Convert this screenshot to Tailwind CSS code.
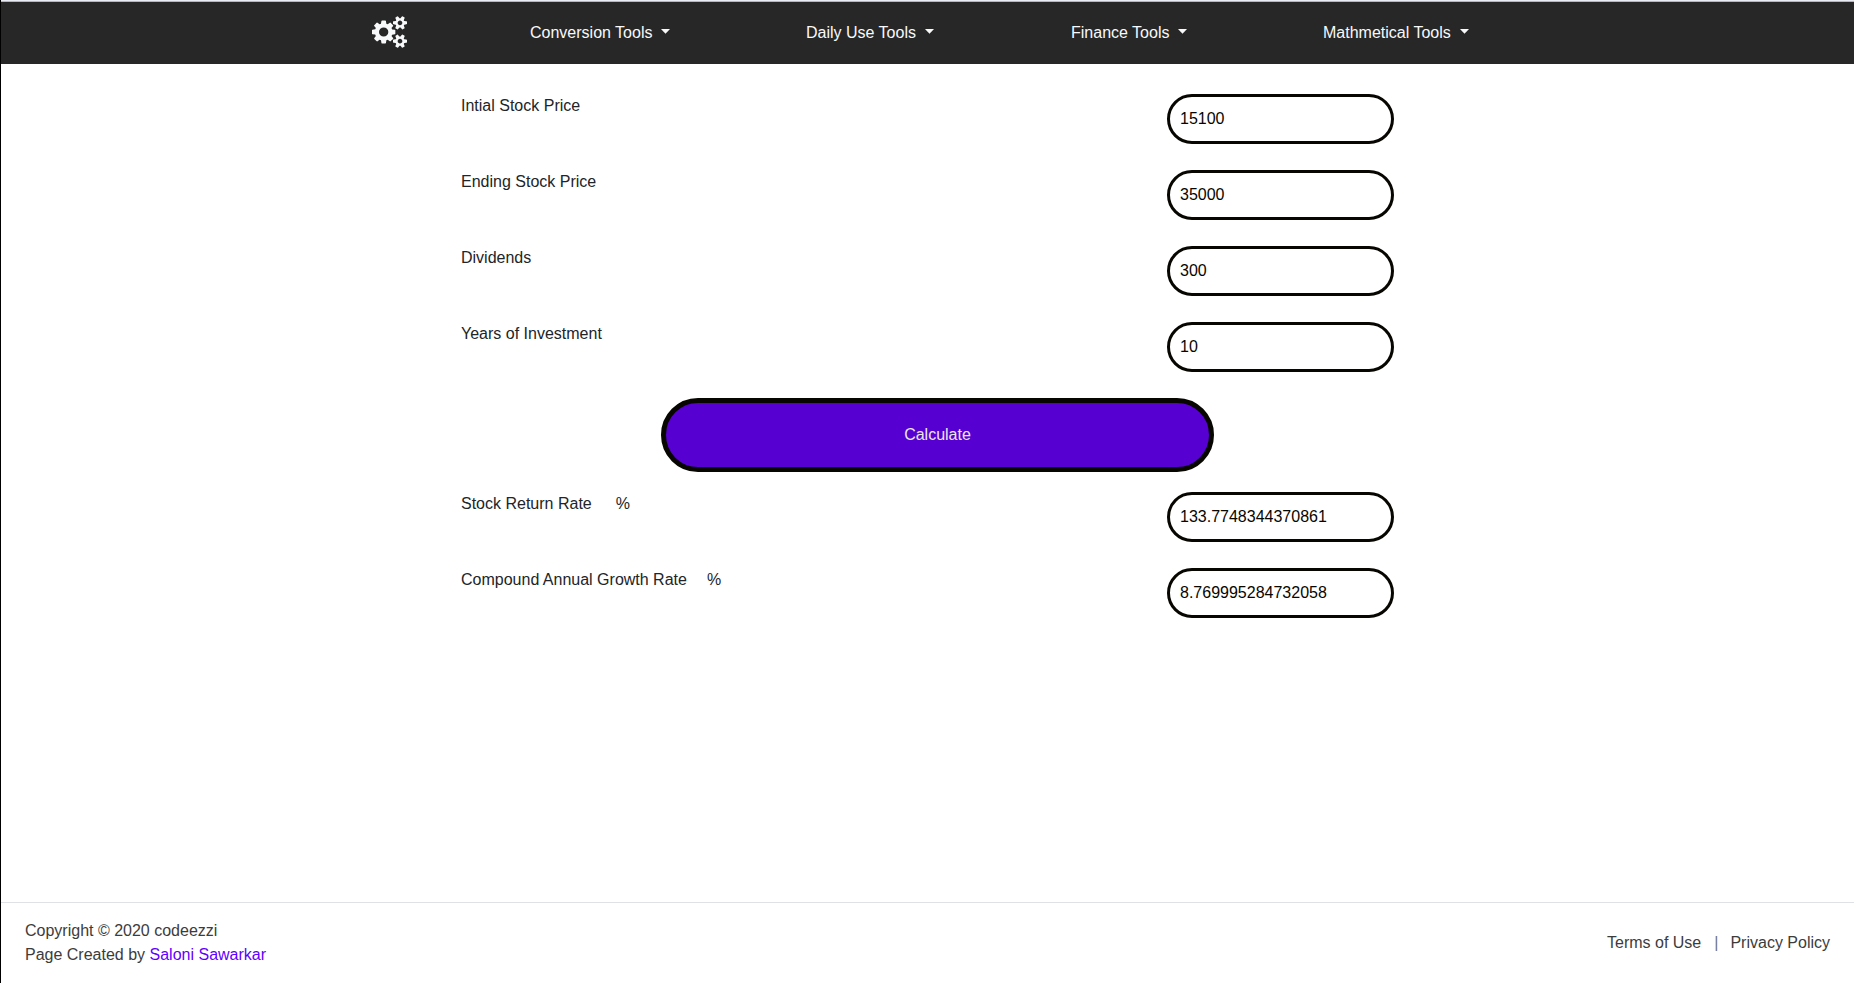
<!DOCTYPE html>
<html lang="en">
<head>
<meta charset="utf-8">
<title>Stock Return Calculator</title>
<script src="https://cdn.jsdelivr.net/npm/@tailwindcss/browser@4"></script>
</head>
<body class="flex h-[983px] flex-col overflow-hidden border-l border-black bg-white font-['Liberation_Sans',Arial,sans-serif] text-base text-[#212529]">
<header class="h-16 shrink-0 border-t border-[#e9ecf5] bg-[#272727] text-[#f8f9fa]">
  <div class="flex h-full w-full items-center border-t border-[#b4b7c0] pl-[371px]">
    <svg class="mb-[3px] h-8 w-[35px] shrink-0" viewBox="0 0 1920 1792" preserveAspectRatio="none" fill="currentColor"><path d="M896 896q0-106-75-181t-181-75-181 75-75 181 75 181 181 75 181-75 75-181zm768 512q0-52-38-90t-90-38-90 38-38 90q0 53 37.5 90.5t90.5 37.5 90.5-37.5 37.5-90.5zm0-1024q0-52-38-90t-90-38-90 38-38 90q0 53 37.5 90.5t90.5 37.5 90.5-37.5 37.5-90.5zm-384 421v185q0 10-7 19.5t-16 10.5l-155 24q-11 35-32 76 34 48 90 115 7 11 7 20 0 12-7 19-23 30-82.5 89.5t-78.5 59.5q-11 0-21-7l-115-90q-37 19-77 31-11 108-23 155-7 24-30 24h-186q-11 0-20-7.5t-10-17.5l-23-153q-34-10-75-31l-118 89q-7 7-20 7-11 0-21-8-144-133-144-160 0-9 7-19 10-14 41-53t47-61q-23-44-35-82l-152-24q-10-1-17-9.5t-7-19.5v-185q0-10 7-19.5t16-10.5l155-24q11-35 32-76-34-48-90-115-7-11-7-20 0-12 7-20 22-30 82-89t79-59q11 0 21 7l115 90q34-18 77-32 11-108 23-154 7-24 30-24h186q11 0 20 7.5t10 17.5l23 153q34 10 75 31l118-89q8-7 20-7 11 0 21 8 144 133 144 160 0 8-7 19-12 16-42 54t-45 60q23 48 34 82l152 23q10 2 17 10.5t7 19.5zm640 533v140q0 16-149 31-12 27-30 52 51 113 51 138 0 4-4 7-122 71-124 71-8 0-46-47t-52-68q-20 2-30 2t-30-2q-14 21-52 68t-46 47q-2 0-124-71-4-3-4-7 0-25 51-138-18-25-30-52-149-15-149-31v-140q0-16 149-31 13-29 30-52-51-113-51-138 0-4 4-7 4-2 35-20t59-34 30-16q8 0 46 46.5t52 67.5q20-2 30-2t30 2q51-71 92-112l6-2q4 0 124 70 4 3 4 7 0 25-51 138 17 23 30 52 149 15 149 31zm0-1024v140q0 16-149 31-12 27-30 52 51 113 51 138 0 4-4 7-122 71-124 71-8 0-46-47t-52-68q-20 2-30 2t-30-2q-14 21-52 68t-46 47q-2 0-124-71-4-3-4-7 0-25 51-138-18-25-30-52-149-15-149-31v-140q0-16 149-31 13-29 30-52-51-113-51-138 0-4 4-7 4-2 35-20t59-34 30-16q8 0 46 46.5t52 67.5q20-2 30-2t30 2q51-71 92-112l6-2q4 0 124 70 4 3 4 7 0 25-51 138 17 23 30 52 149 15 149 31z"/></svg>
    <nav class="flex items-center pl-[123px] whitespace-nowrap">
      <a class="flex w-[276px] items-center">Conversion Tools<svg class="mb-[3px] ml-[9px] h-[5px] w-[9px]" viewBox="0 0 9 5" fill="currentColor"><path d="M0 0h9L4.5 4.7z"/></svg></a>
      <a class="flex w-[265px] items-center">Daily Use Tools<svg class="mb-[3px] ml-[9px] h-[5px] w-[9px]" viewBox="0 0 9 5" fill="currentColor"><path d="M0 0h9L4.5 4.7z"/></svg></a>
      <a class="flex w-[252px] items-center">Finance Tools<svg class="mb-[3px] ml-[9px] h-[5px] w-[9px]" viewBox="0 0 9 5" fill="currentColor"><path d="M0 0h9L4.5 4.7z"/></svg></a>
      <a class="flex items-center">Mathmetical Tools<svg class="mb-[3px] ml-[9px] h-[5px] w-[9px]" viewBox="0 0 9 5" fill="currentColor"><path d="M0 0h9L4.5 4.7z"/></svg></a>
    </nav>
  </div>
</header>
<main class="ml-[460px] flex w-[933px] grow flex-col pt-[30px]">
  <label class="mb-[26px] flex h-[50px] justify-between"><span>Intial Stock Price</span><input class="h-[50px] w-[227px] rounded-[25px] border-3 border-[#080600] px-2.5 text-[#080600]" value="15100"></label>
  <label class="mb-[26px] flex h-[50px] justify-between"><span>Ending Stock Price</span><input class="h-[50px] w-[227px] rounded-[25px] border-3 border-[#080600] px-2.5 text-[#080600]" value="35000"></label>
  <label class="mb-[26px] flex h-[50px] justify-between"><span>Dividends</span><input class="h-[50px] w-[227px] rounded-[25px] border-3 border-[#080600] px-2.5 text-[#080600]" value="300"></label>
  <label class="mb-[26px] flex h-[50px] justify-between"><span>Years of Investment</span><input class="h-[50px] w-[227px] rounded-[25px] border-3 border-[#080600] px-2.5 text-[#080600]" value="10"></label>
  <button class="mb-5 ml-[200px] h-[74px] w-[553px] shrink-0 rounded-[37px] border-5 border-[#080600] bg-[#5600d2] text-[#ece6e6]">Calculate</button>
  <label class="mb-[26px] flex h-[50px] justify-between"><span>Stock Return Rate<span class="ml-6">%</span></span><input class="h-[50px] w-[227px] rounded-[25px] border-3 border-[#080600] px-2.5 text-[#080600]" value="133.7748344370861"></label>
  <label class="flex h-[50px] justify-between"><span>Compound Annual Growth Rate<span class="ml-5">%</span></span><input class="h-[50px] w-[227px] rounded-[25px] border-3 border-[#080600] px-2.5 text-[#080600]" value="8.769995284732058"></label>
</main>
<footer class="flex h-[81px] shrink-0 items-center justify-between border-t border-[#dee2e6] px-6 text-[#3c3c3c]">
  <div>Copyright © 2020 codeezzi<br>Page Created by <a class="text-[#6200ff]">Saloni Sawarkar</a></div>
  <div class="flex"><a>Terms of Use</a><span class="mr-3 ml-[13px] text-[#6c757d]">|</span><a>Privacy Policy</a></div>
</footer>
</body>
</html>
